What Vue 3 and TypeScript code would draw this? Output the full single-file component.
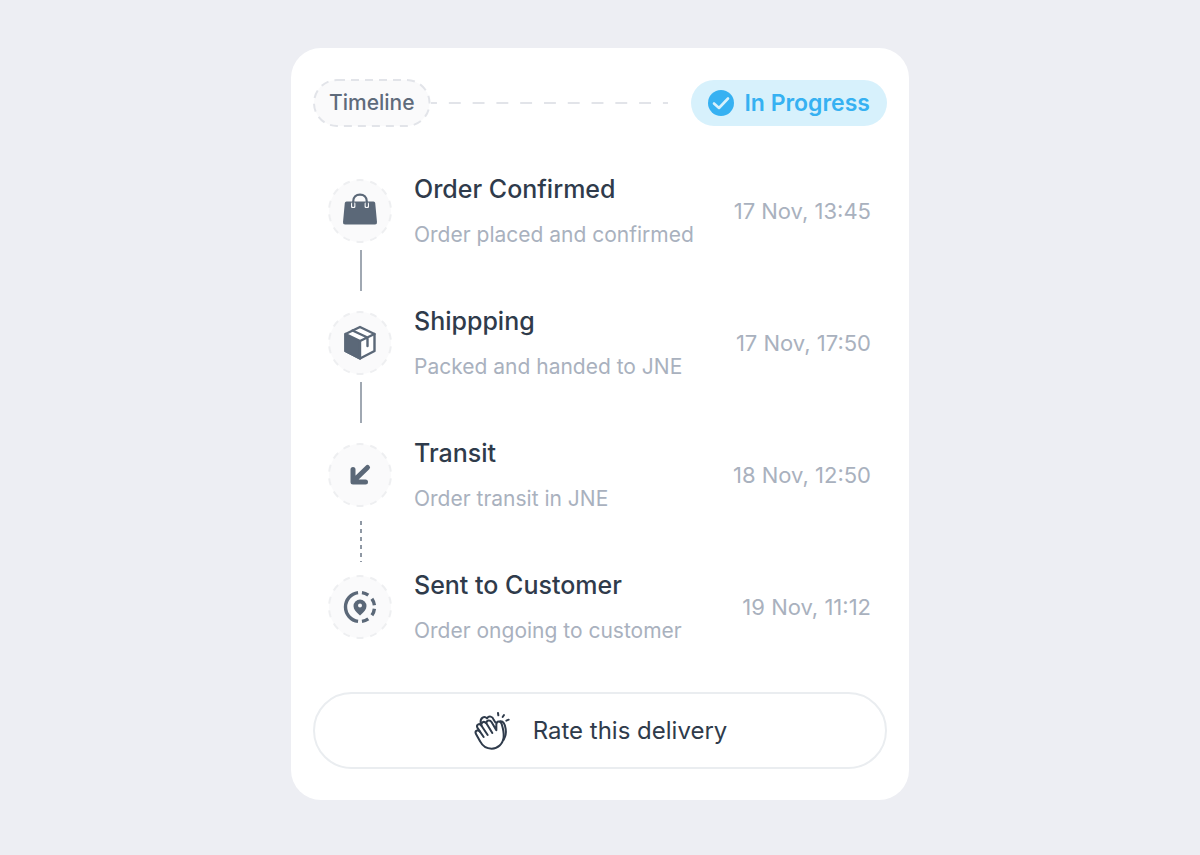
<script setup lang="ts">
type IconName = 'bag' | 'box' | 'arrow' | 'pin'
type Connector = 'solid' | 'dotted' | 'none'

interface Step {
  title: string
  detail: string
  time: string
  icon: IconName
  connector: Connector
}

const steps: Step[] = [
  { title: 'Order Confirmed', detail: 'Order placed and confirmed', time: '17 Nov, 13:45', icon: 'bag', connector: 'solid' },
  { title: 'Shippping', detail: 'Packed and handed to JNE', time: '17 Nov, 17:50', icon: 'box', connector: 'solid' },
  { title: 'Transit', detail: 'Order transit in JNE', time: '18 Nov, 12:50', icon: 'arrow', connector: 'dotted' },
  { title: 'Sent to Customer', detail: 'Order ongoing to customer', time: '19 Nov, 11:12', icon: 'pin', connector: 'none' },
]
</script>

<template>
  <main class="page">
    <section class="card">
      <header class="head">
        <h1 class="label">
          <svg class="label-outline" aria-hidden="true">
            <rect class="label-rect" x="1" y="1" rx="23" />
          </svg>
          <span class="label-text">Timeline</span>
        </h1>
        <svg class="rule" viewBox="0 0 236 2" preserveAspectRatio="none" aria-hidden="true">
          <path d="M0 1H236" pathLength="240" stroke="#e2e4e9" stroke-width="2" stroke-dasharray="12 12" stroke-dashoffset="6" />
        </svg>
        <div class="status">
          <svg width="26" height="26" viewBox="0 0 26 26" aria-hidden="true">
            <circle cx="13" cy="13" r="13" fill="#36b1f2" />
            <path d="M6 13.5L11 18L20 8.5" fill="none" stroke="#d7f1fc" stroke-width="2.6" stroke-linecap="round" stroke-linejoin="round" />
          </svg>
          <span>In Progress</span>
        </div>
      </header>

      <ol class="steps">
        <li v-for="step in steps" :key="step.title">
          <div class="row">
            <svg class="badge" viewBox="0 0 64 64" aria-hidden="true">
              <circle cx="32" cy="32" r="31" fill="#fafafb" />
              <circle cx="32" cy="32" r="31" pathLength="196" fill="none" stroke="#eeeff1" stroke-width="2" stroke-dasharray="7 7" stroke-dashoffset="3.5" transform="rotate(-90 32 32)" />
              <g v-if="step.icon === 'bag'">
                <path d="M18.5 22.5H45.5Q47 22.5 47.2 24L49 43Q49.2 45.5 47 45.5H17Q14.8 45.5 15 43L16.8 24Q17 22.5 18.5 22.5Z" fill="#5b6878" />
                <rect x="23" y="23.5" width="4.4" height="5.5" rx="1.2" fill="#fafafb" />
                <rect x="36.6" y="23.5" width="4.4" height="5.5" rx="1.2" fill="#fafafb" />
                <path d="M25.2 27V22.5C25.2 18 28.2 15.600 32 15.600S38.8 18 38.8 22.5V27" fill="none" stroke="#5b6878" stroke-width="2.2" stroke-linecap="round" />
              </g>
              <g v-else-if="step.icon === 'box'" stroke="#5b6878" stroke-width="2.4" stroke-linejoin="round" stroke-linecap="round">
                <path d="M32 16L46.5 23V40L32 47.5L17.5 40V23Z" fill="#fff" />
                <path d="M17.5 23L32 30V47.5L17.5 40Z" fill="#5b6878" />
                <path d="M32 30L46.5 23M24.5 19.5L39.5 26.5V35" fill="none" />
              </g>
              <path v-else-if="step.icon === 'arrow'" d="M39.5 24.5L25.5 38M25 26.5V39H37.5" fill="none" stroke="#5b6878" stroke-width="5" stroke-linecap="round" stroke-linejoin="round" />
              <g v-else>
                <circle cx="32" cy="32" r="14.5" pathLength="360" fill="none" stroke="#5b6878" stroke-width="3.4" stroke-dasharray="27 20 28 14 28 20 27 16 164 16" stroke-dashoffset="-8" transform="rotate(-90 32 32)" />
                <path d="M32 40.500C28 37 25.500 34.500 25.500 31A6.500 6.500 0 0 1 38.500 31C38.500 34.500 36 37 32 40.500Z" fill="#5b6878" />
                <circle cx="32" cy="30.500" r="2" fill="#fafafb" />
              </g>
            </svg>
            <div class="text">
              <h2>{{ step.title }}</h2>
              <p>{{ step.detail }}</p>
            </div>
            <time>{{ step.time }}</time>
          </div>
          <div v-if="step.connector !== 'none'" class="connector" :class="step.connector"></div>
        </li>
      </ol>

      <button class="rate" type="button">
        <svg width="38" height="40" viewBox="26 30 114 120" fill="none" stroke="#2f3b4b" stroke-width="6" stroke-linecap="round" stroke-linejoin="round" aria-hidden="true">
          <path d="M58 108L47 92C41 84 30 90 35 99L48 122C55 136 64 143 82 143C100 143 116 130 118 108C119 95 116 82 112 69C108 58 97 60 96 70L96 88L82 64C77 56 66 57 66 67" />
          <path d="M47 92L39 80C35 70 46 65 52 75L70 102" />
          <path d="M52 75C48 65 58 58 66 67L84 96" />
          <path d="M49 66C47 50 60 44 68 52C74 43 85 46 88 56L93 64" />
          <path d="M108 61C118 60 122 70 124 84C126 97 124 106 118 116" />
          <path d="M101 36L102 43M119 42L115 48M133 56L126 59" />
        </svg>
        <span>Rate this delivery</span>
      </button>
    </section>
  </main>
</template>

<style>
body {
  margin: 0;
  background: #edeef3;
}
</style>

<style scoped>
.page {
  box-sizing: border-box;
  min-height: 100vh;
  padding: 48px 24px;
  background: #edeef3;
  font-family: Inter, "Liberation Sans", sans-serif;
}
.card {
  box-sizing: border-box;
  max-width: 618px;
  margin: 0 auto;
  padding: 31px 22px;
  border-radius: 30px;
  background: #fff;
}
.head {
  display: flex;
  align-items: center;
}
.label {
  position: relative;
  box-sizing: border-box;
  height: 48px;
  margin: 0;
  padding: 0 16px;
  font-size: 21px;
  line-height: 48px;
  font-weight: 500;
  color: #5f6b7b;
}
.label-outline {
  position: absolute;
  inset: 0;
  width: 100%;
  height: 100%;
}
.label-rect {
  width: calc(100% - 2px);
  height: calc(100% - 2px);
  fill: #fafafb;
  stroke: #e2e4e9;
  stroke-width: 2px;
  stroke-dasharray: 8 6;
}
.label-text {
  position: relative;
}
.rule {
  flex: 1;
  min-width: 0;
  height: 2px;
  margin-right: 23px;
}
.status {
  display: flex;
  align-items: center;
  gap: 10px;
  height: 46px;
  padding: 0 17px;
  border-radius: 23px;
  background: #d7f1fc;
  font-size: 23px;
  font-weight: 600;
  color: #36b1f2;
}
.steps {
  margin: 46px 0 0;
  padding: 0 16px 0 15px;
  list-style: none;
}
.row {
  display: flex;
  align-items: center;
  height: 76px;
}
.badge {
  flex: none;
  width: 64px;
  height: 64px;
  margin-right: 22px;
}
.text {
  flex: 1;
}
h2 {
  margin: 0 0 16px;
  font-size: 25px;
  line-height: 32px;
  font-weight: 500;
  color: #2f3b4b;
}
p {
  margin: 0;
  font-size: 21px;
  line-height: 28px;
  color: #a9b1be;
}
time {
  font-size: 22px;
  color: #a9b1be;
}
.connector {
  width: 2px;
  height: 41px;
  margin: 1px 0 14px 32px;
  background: #a0a8b2;
}
.dotted {
  margin-top: 8px;
  margin-bottom: 7px;
  background: repeating-linear-gradient(#8f98a4 0 4px, transparent 4px 8px);
}
.rate {
  display: flex;
  align-items: center;
  justify-content: center;
  gap: 22px;
  width: 100%;
  height: 77px;
  margin-top: 47px;
  border: 2px solid #eaedf0;
  border-radius: 39px;
  background: #fff;
  font-family: inherit;
  font-size: 24px;
  color: #2f3b4b;
}
</style>
